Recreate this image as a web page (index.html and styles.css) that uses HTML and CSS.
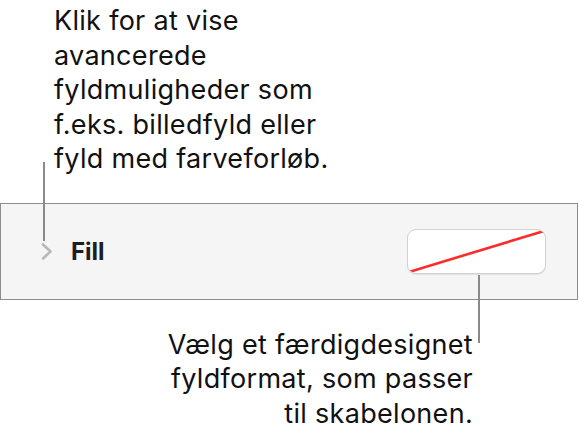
FILE: index.html
```html
<!DOCTYPE html>
<html lang="da">
<head>
<meta charset="utf-8">
<title>Fyld</title>
<link rel="stylesheet" href="styles.css">
</head>
<body>
<div class="page">
  <p class="callout callout-top">Klik for at vise<br>avancerede<br>fyldmuligheder som<br>f.eks. billedfyld eller<br>fyld med farveforløb.</p>

  <section class="panel">
    <span class="disclosure" aria-hidden="true">
      <svg width="12" height="17" viewBox="0 0 12 17"><path d="M2 1.5 L9.5 8.5 L2 15.5" fill="none" stroke="#b9b9b9" stroke-width="2.6" stroke-linecap="round" stroke-linejoin="round"/></svg>
    </span>
    <span class="panel-title">Fill</span>
    <button class="swatch" type="button" aria-label="Ingen udfyldning">
      <svg width="139" height="45" viewBox="0 0 139 45"><line x1="2" y1="43" x2="137" y2="2" stroke="#ff2b2b" stroke-width="2.6"/></svg>
    </button>
  </section>

  <p class="callout callout-bottom">Vælg et færdigdesignet<br>fyldformat, som passer<br>til skabelonen.</p>

  <span class="leader leader-disclosure"></span>
  <span class="leader leader-swatch"></span>
</div>
</body>
</html>
```

FILE: styles.css
```css
html, body {
  margin: 0;
  padding: 0;
  background: #ffffff;
}

.page {
  position: relative;
  width: 579px;
  height: 429px;
  padding-top: 4px;
  box-sizing: border-box;
  font-family: Inter, "Liberation Sans", Arial, sans-serif;
  color: #111111;
}

.callout {
  margin: 0;
  font-size: 27px;
  line-height: 34.5px;
  letter-spacing: 0.3px;
}

.callout-top {
  padding-left: 54px;
}

.callout-bottom {
  text-align: right;
  padding-right: 106px;
  margin-top: 28px;
}

.panel {
  display: flex;
  align-items: center;
  height: 95px;
  margin-top: 26px;
  margin-right: 1px;
  border: 1px solid #8c8c8c;
  background: #f5f5f5;
  padding-left: 40px;
  padding-right: 31px;
}

.disclosure {
  display: flex;
  width: 12px;
  height: 17px;
  margin-top: 1px;
}

.panel-title {
  margin-left: 18px;
  font-size: 24px;
  font-weight: 700;
  color: #1e1e1e;
  margin-top: 1px;
}

.swatch {
  display: flex;
  margin-left: auto;
  width: 139px;
  height: 45px;
  padding: 0;
  border: 1px solid #d2d2d2;
  border-radius: 9px;
  background: #ffffff;
  box-shadow: 0 1px 1px rgba(0, 0, 0, 0.08);
  overflow: hidden;
}

.swatch svg {
  display: block;
  margin: -1px;
}

.leader {
  position: absolute;
  width: 2px;
  background: #8a8a8a;
}

.leader-disclosure {
  left: 43px;
  top: 162px;
  height: 79px;
}

.leader-swatch {
  left: 478px;
  top: 275px;
  height: 68px;
}
```
